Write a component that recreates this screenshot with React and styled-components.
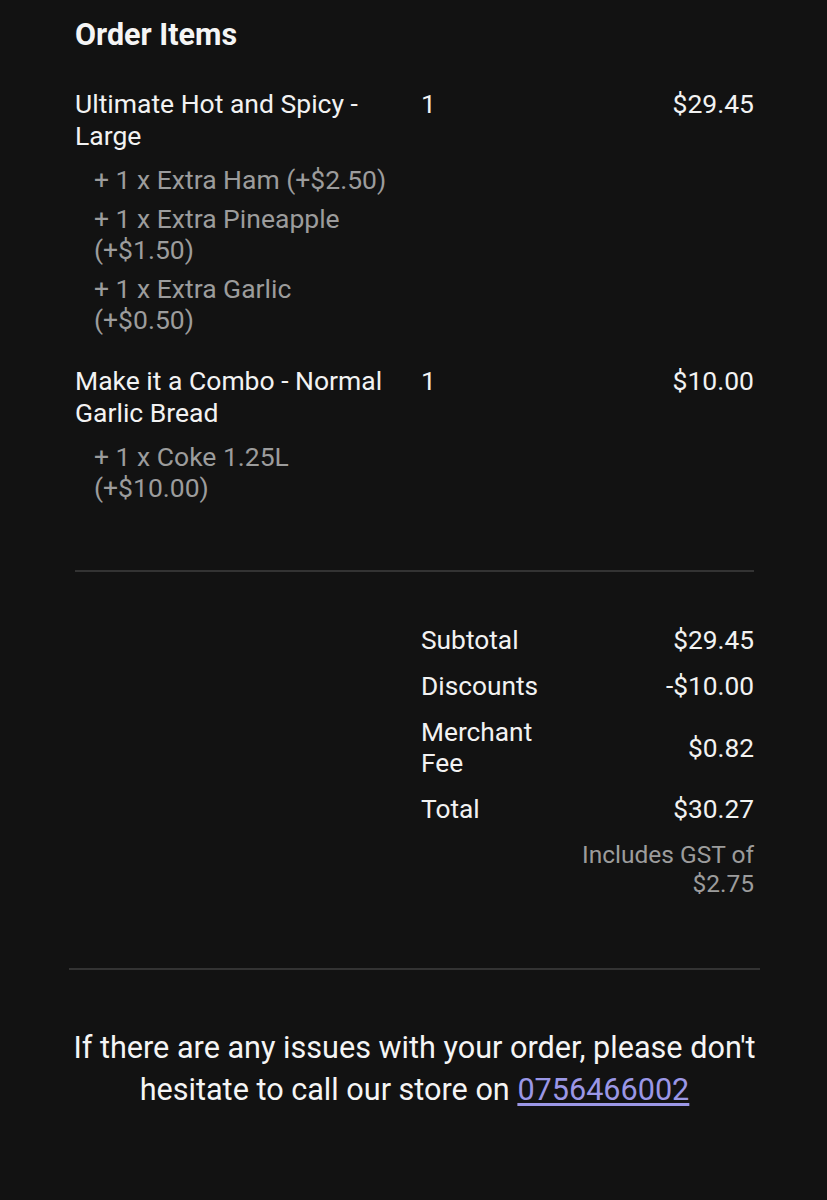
import React from 'react'
import styled, { createGlobalStyle } from 'styled-components'

const GlobalStyle = createGlobalStyle`
  html, body {
    margin: 0;
    padding: 0;
    background: #121212;
  }
  body {
    font-family: Roboto, "Noto Sans", "Liberation Sans", sans-serif;
    color: #f2f2f2;
  }
`

const Page = styled.div`
  min-height: 1200px;
  padding: 19px 67px 0 69px;
  background: #121212;
`

const Section = styled.section`
  padding: 0 6px;
`

const Heading = styled.h2`
  margin: 0 0 37px;
  font-size: 30.5px;
  line-height: 32px;
  font-weight: 700;
  color: #f5f5f5;
`

const ItemList = styled.div`
  display: flex;
  flex-direction: column;
  gap: 30px;
`

const ItemRow = styled.div`
  display: grid;
  grid-template-columns: 316px 1fr auto;
  column-gap: 30px;
  font-size: 26.5px;
  line-height: 32px;
`

const Name = styled.div`
  color: #f2f2f2;
`

const Qty = styled.div`
  color: #f2f2f2;
`

const Price = styled.div`
  text-align: right;
  color: #f2f2f2;
`

const Modifiers = styled.ul`
  list-style: none;
  margin: 12px 0 0;
  padding: 0 0 0 19px;
  display: flex;
  flex-direction: column;
  gap: 8px;
`

const Modifier = styled.li`
  color: #9c9c9c;
  font-size: 26.5px;
  line-height: 31px;
`

const Rule = styled.hr`
  border: 0;
  height: 2px;
  background: #333333;
  margin: ${(p) => p.$margin};
`

const Totals = styled.div`
  margin-left: 346px;
  display: grid;
  grid-template-columns: 140px 1fr;
  row-gap: 15px;
  align-items: center;
  font-size: 26.3px;
  line-height: 31px;
`

const Label = styled.div`
  color: #f2f2f2;
`

const Amount = styled.div`
  text-align: right;
  color: #f2f2f2;
`

const Gst = styled.div`
  grid-column: 2;
  text-align: right;
  color: #9c9c9c;
  font-size: 24.5px;
  line-height: 29px;
`

const Footer = styled.p`
  margin: 0;
  padding-top: 57px;
  text-align: center;
  font-size: 30.6px;
  line-height: 42px;
  color: #f5f5f5;
`

const Phone = styled.a`
  color: #9b97e6;
  text-decoration: underline;
  text-underline-offset: 3px;
`

const items = [
  {
    name: 'Ultimate Hot and Spicy - Large',
    qty: 1,
    price: '$29.45',
    mods: ['+ 1 x Extra Ham (+$2.50)', '+ 1 x Extra Pineapple (+$1.50)', '+ 1 x Extra Garlic (+$0.50)'],
  },
  {
    name: 'Make it a Combo - Normal Garlic Bread',
    qty: 1,
    price: '$10.00',
    mods: ['+ 1 x Coke 1.25L (+$10.00)'],
  },
]

const totals = [
  ['Subtotal', '$29.45'],
  ['Discounts', '-$10.00'],
  ['Merchant Fee', '$0.82'],
  ['Total', '$30.27'],
]

const App = () => (
  <Page>
    <GlobalStyle />
    <Section>
      <Heading>Order Items</Heading>
      <ItemList>
        {items.map((item) => (
          <ItemRow key={item.name}>
            <div>
              <Name>{item.name}</Name>
              <Modifiers>
                {item.mods.map((m) => (
                  <Modifier key={m}>{m}</Modifier>
                ))}
              </Modifiers>
            </div>
            <Qty>{item.qty}</Qty>
            <Price>{item.price}</Price>
          </ItemRow>
        ))}
      </ItemList>
      <Rule $margin="67px 0 53px" />
      <Totals>
        {totals.map(([label, value]) => (
          <React.Fragment key={label}>
            <Label>{label}</Label>
            <Amount>{value}</Amount>
          </React.Fragment>
        ))}
        <Gst>Includes GST of $2.75</Gst>
      </Totals>
    </Section>
    <Rule $margin="70px 0 0" />
    <Footer>
      If there are any issues with your order, please don't hesitate to call our store on{' '}
      <Phone href="tel:0756466002">0756466002</Phone>
    </Footer>
  </Page>
)

export default App
